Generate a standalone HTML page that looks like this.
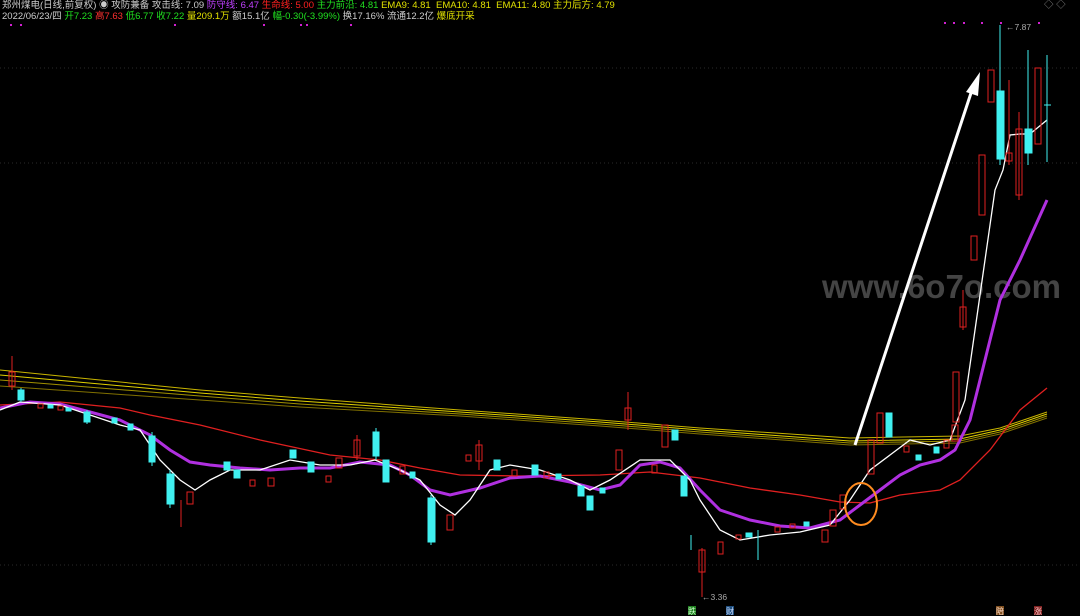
<!DOCTYPE html>
<html><head><meta charset="utf-8"><style>
html,body{margin:0;padding:0;background:#000;width:1080px;height:616px;overflow:hidden}
.t{position:absolute;left:2px;font-family:"Liberation Sans","Noto Sans CJK SC",sans-serif;font-size:9.5px;white-space:nowrap;line-height:11px}
</style></head><body>
<div class="t" style="top:0"><span style="color:#ccc">郑州煤电(日线,前复权) ◉ 攻防兼备 攻击线: 7.09 </span><span style="color:#c040ff">防守线: 6.47 </span><span style="color:#ff2020">生命线: 5.00 </span><span style="color:#20e020">主力前沿: 4.81 </span><span style="color:#e0e000">EMA9: 4.81 &nbsp;EMA10: 4.81 &nbsp;EMA11: 4.80 </span><span style="color:#e0e000">主力后方: 4.79</span></div>
<div class="t" style="top:11px"><span style="color:#ccc">2022/06/23/四 </span><span style="color:#20e020">开7.23 </span><span style="color:#ff3030">高7.63 </span><span style="color:#20e020">低6.77 收7.22 </span><span style="color:#e0e000">量209.1万 </span><span style="color:#ccc">额15.1亿 </span><span style="color:#20e020">幅-0.30(-3.99%) </span><span style="color:#ccc">换17.16% 流通12.2亿 </span><span style="color:#e0e000">爆底开采</span></div>
<div class="t" style="top:0;left:1044px;color:#888">◇ ◇</div>
<svg width="1080" height="616" style="position:absolute;left:0;top:0" xmlns="http://www.w3.org/2000/svg">
<g fill="#d020d0"><rect x="10" y="24" width="2" height="2"/><rect x="20" y="24" width="2" height="2"/><rect x="174" y="24" width="2" height="2"/><rect x="263" y="24" width="2" height="2"/><rect x="300" y="24" width="2" height="2"/><rect x="306" y="24" width="2" height="2"/><rect x="350" y="24" width="2" height="2"/><rect x="944" y="22" width="2" height="2"/><rect x="953" y="22" width="2" height="2"/><rect x="963" y="22" width="2" height="2"/><rect x="981" y="22" width="2" height="2"/><rect x="1000" y="22" width="2" height="2"/><rect x="1038" y="22" width="2" height="2"/></g>
<g stroke="#2a2a2a" stroke-dasharray="1,3"><line x1="0" y1="68" x2="1080" y2="68"/><line x1="0" y1="163" x2="1080" y2="163"/><line x1="0" y1="565" x2="1080" y2="565"/></g>
<text x="822" y="298" font-family="Liberation Sans,sans-serif" font-size="33" font-weight="bold" fill="#444">www.6o7o.com</text>
<g fill="none" stroke-width="1">
<polyline stroke="#c8b400" points="0,370 100,380 200,390 300,398 460,410 600,420 700,428 850,438 960,436 1000,428 1047,412"/>
<polyline stroke="#e0d000" points="0,375 100,384 200,393 300,401 460,412 600,422 700,430 850,441 960,439 1000,430 1047,414"/>
<polyline stroke="#a09000" points="0,380 100,388 200,396 300,404 460,414 600,424 700,432 850,443 960,441 1000,432 1047,416"/>
<polyline stroke="#807000" points="0,386 100,393 200,400 300,407 460,416 600,426 700,434 850,445 960,443 1000,434 1047,418"/>
<polyline stroke="#e02020" stroke-width="1.3" points="0,405 60,402 120,408 150,415 200,425 260,440 330,455 380,460 420,468 460,475 520,476 600,475 650,472 700,478 750,488 800,495 840,502 870,503 900,495 940,490 960,480 990,450 1020,410 1047,388"/>
<polyline stroke="#b030e0" stroke-width="3" points="0,408 30,402 60,404 90,412 120,420 150,435 170,450 190,462 210,465 240,468 270,470 300,468 330,468 360,462 390,465 410,475 430,490 450,495 480,488 510,478 540,476 570,482 600,490 620,485 640,465 660,462 680,468 700,490 720,510 750,520 780,526 810,528 840,520 860,505 880,490 900,475 920,465 940,460 955,450 970,420 985,360 1000,300 1020,260 1047,200"/>
<polyline stroke="#fff" stroke-width="1.3" points="0,410 20,402 60,405 90,415 120,425 140,430 160,460 180,480 195,490 210,480 230,470 260,470 290,460 320,465 350,465 375,460 400,470 420,480 440,505 455,515 470,500 490,470 510,465 540,470 570,480 590,490 610,480 640,460 670,460 690,480 700,500 720,530 740,540 770,535 800,532 830,525 850,500 870,470 890,455 910,440 930,445 950,440 965,400 975,330 985,260 995,190 1003,170 1010,135 1020,134 1030,134 1047,120"/>
</g>
<g stroke="#40f0f0" fill="#40f0f0">
<line x1="21" y1="388" x2="21" y2="402"/><rect x="18" y="390" width="6" height="10"/>
<rect x="48" y="405" width="5" height="3"/><rect x="66" y="408" width="5" height="3"/>
<line x1="87" y1="410" x2="87" y2="424"/><rect x="84" y="412" width="6" height="10"/>
<rect x="112" y="418" width="5" height="5"/><rect x="128" y="424" width="5" height="6"/>
<line x1="152" y1="432" x2="152" y2="466"/><rect x="149" y="436" width="6" height="26"/>
<line x1="170" y1="470" x2="170" y2="508"/><rect x="167" y="474" width="7" height="30"/>
<rect x="224" y="462" width="6" height="8"/><rect x="234" y="470" width="6" height="8"/>
<rect x="290" y="450" width="6" height="8"/><rect x="308" y="462" width="6" height="10"/>
<line x1="376" y1="428" x2="376" y2="460"/><rect x="373" y="432" width="6" height="24"/>
<rect x="383" y="460" width="6" height="22"/>
<rect x="410" y="472" width="5" height="6"/>
<line x1="431" y1="495" x2="431" y2="545"/><rect x="428" y="498" width="7" height="44"/>
<rect x="494" y="460" width="6" height="10"/><rect x="532" y="465" width="6" height="10"/>
<rect x="556" y="474" width="5" height="5"/>
<rect x="578" y="486" width="6" height="10"/><rect x="587" y="496" width="6" height="14"/>
<rect x="600" y="488" width="5" height="5"/>
<rect x="672" y="430" width="6" height="10"/><rect x="681" y="476" width="6" height="20"/>
<line x1="691" y1="535" x2="691" y2="550"/><rect x="746" y="533" width="6" height="4"/>
<line x1="758" y1="530" x2="758" y2="560"/><rect x="804" y="522" width="5" height="4"/>
<rect x="886" y="413" width="6" height="24"/><rect x="916" y="455" width="5" height="5"/><rect x="934" y="447" width="5" height="6"/>
<line x1="1000" y1="25" x2="1000" y2="165"/><rect x="997" y="91" width="7" height="68"/>
<line x1="1028" y1="50" x2="1028" y2="165"/><rect x="1025" y="129" width="7" height="24"/>
<line x1="1047" y1="55" x2="1047" y2="162"/><line x1="1044" y1="105" x2="1051" y2="105"/>
</g>
<g stroke="#e02020" fill="none">
<line x1="12" y1="356" x2="12" y2="390"/><rect x="9" y="372" width="6" height="14"/>
<rect x="38" y="404" width="5" height="4"/><rect x="58" y="406" width="5" height="4"/>
<rect x="187" y="492" width="6" height="12"/><line x1="181" y1="500" x2="181" y2="527"/>
<rect x="250" y="480" width="5" height="6"/>
<rect x="268" y="478" width="6" height="8"/><rect x="326" y="476" width="5" height="6"/><rect x="336" y="458" width="6" height="10"/>
<line x1="357" y1="435" x2="357" y2="460"/><rect x="354" y="440" width="6" height="16"/>
<rect x="400" y="466" width="5" height="8"/>
<rect x="447" y="515" width="6" height="15"/><rect x="466" y="455" width="5" height="6"/>
<line x1="479" y1="440" x2="479" y2="470"/><rect x="476" y="445" width="6" height="16"/>
<rect x="512" y="470" width="5" height="6"/><rect x="544" y="472" width="5" height="6"/>
<rect x="616" y="450" width="6" height="20"/><line x1="628" y1="392" x2="628" y2="430"/><rect x="625" y="408" width="6" height="12"/>
<rect x="652" y="465" width="5" height="8"/>
<rect x="662" y="425" width="6" height="22"/>
<line x1="702" y1="548" x2="702" y2="597"/><rect x="699" y="550" width="6" height="22"/>
<rect x="718" y="542" width="5" height="12"/><rect x="736" y="535" width="5" height="4"/><rect x="775" y="527" width="5" height="5"/><rect x="790" y="524" width="5" height="4"/>
<rect x="822" y="530" width="6" height="12"/><rect x="830" y="510" width="6" height="16"/>
<rect x="840" y="495" width="6" height="14"/><rect x="868" y="440" width="6" height="34"/><rect x="877" y="413" width="6" height="30"/>
<rect x="904" y="446" width="5" height="6"/><rect x="944" y="440" width="5" height="8"/>
<rect x="952" y="425" width="6" height="16"/>
<line x1="963" y1="290" x2="963" y2="330"/><rect x="960" y="307" width="6" height="20"/>
<rect x="953" y="372" width="6" height="50"/><rect x="971" y="236" width="6" height="24"/>
<rect x="979" y="155" width="6" height="60"/><rect x="988" y="70" width="6" height="32"/>
<rect x="1006" y="153" width="6" height="8"/><line x1="1009" y1="80" x2="1009" y2="165"/>
<line x1="1019" y1="112" x2="1019" y2="200"/><rect x="1016" y="129" width="6" height="66"/>
<rect x="1035" y="68" width="6" height="76"/>
</g>
<line x1="855" y1="445" x2="972" y2="90" stroke="#fff" stroke-width="3"/>
<polygon points="980,72 966,92 978,96" fill="#fff"/>
<ellipse cx="861" cy="504" rx="16" ry="21" fill="none" stroke="#ff8c20" stroke-width="2"/>
<g font-family="Liberation Sans,sans-serif" font-size="8.5" fill="#aaa"><text x="1006" y="30">←7.87</text><text x="702" y="600">←3.36</text></g>
<g font-family="Noto Sans CJK SC,sans-serif" font-size="8">
<rect x="688" y="606" width="8" height="9" fill="#208020"/><text x="688" y="614" fill="#cfc">跌</text>
<rect x="726" y="606" width="8" height="9" fill="#205080"/><text x="726" y="614" fill="#cdf">财</text>
<rect x="996" y="606" width="8" height="9" fill="#805020"/><text x="996" y="614" fill="#fdc">陪</text>
<rect x="1034" y="606" width="8" height="9" fill="#802020"/><text x="1034" y="614" fill="#fcc">涨</text>
</g>
</svg>
</body></html>
